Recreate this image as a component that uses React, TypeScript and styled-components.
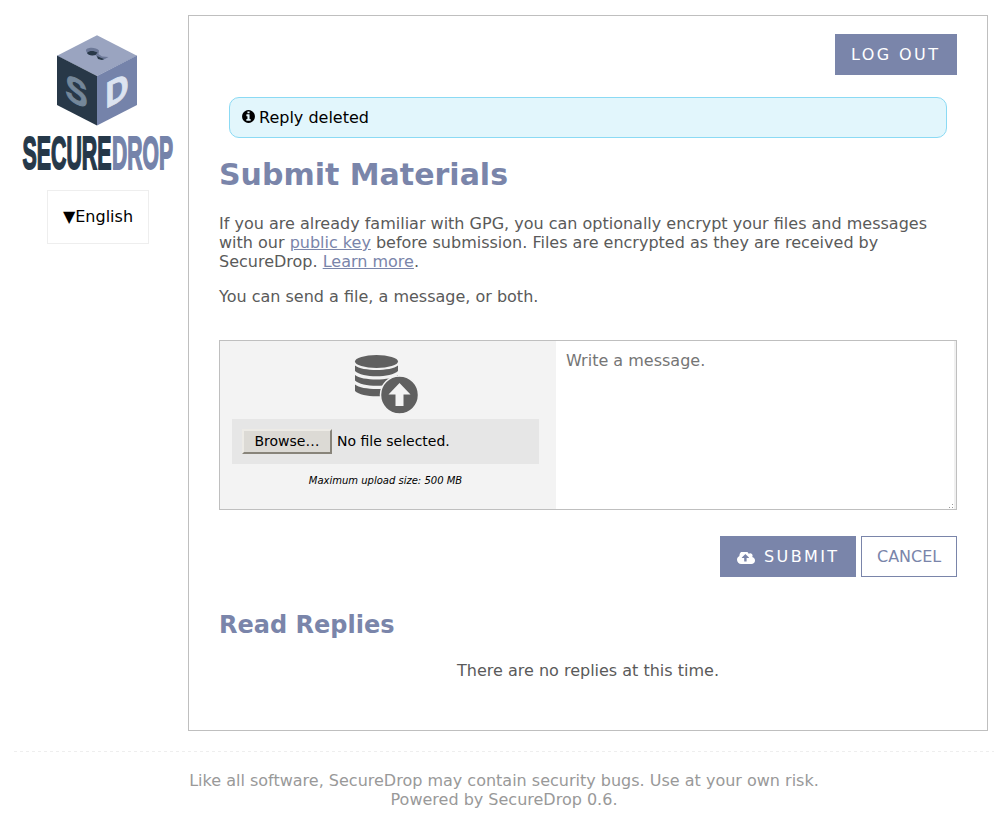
import React from 'react';
import styled, { createGlobalStyle } from 'styled-components';

const GlobalStyle = createGlobalStyle`
  * { box-sizing: border-box; }
  body { margin: 0; background: #fff; color: #5a5a5a; font: 16px/19px "DejaVu Sans", sans-serif; }
  button, textarea { font: inherit; }
`;

const Page = styled.div`
  padding: 15px 14px 0;
  height: 825px;
`;
const Columns = styled.div`
  display: flex;
  height: 716px;
`;
const Sidebar = styled.aside`
  width: 174px;
  display: flex;
  flex-direction: column;
  align-items: center;
  padding-top: 20px;
`;
const Logo = styled.svg`
  display: block;
  width: 152px;
  height: 137px;
  margin-left: -6px;
`;
const LanguageButton = styled.button`
  width: 102px;
  height: 54px;
  margin: 18px 0 0 -6px;
  padding: 0 0 1px;
  border: 1px solid #eee;
  background: #fff;
  color: #000;
  white-space: nowrap;
`;
const Main = styled.main`
  width: 800px;
  border: 1px solid #bfbfbf;
  padding: 18px 30px;
  display: flex;
  flex-direction: column;
`;
const Button = styled.button<{ $outline?: boolean; $width: number }>`
  display: inline-flex;
  align-items: center;
  width: ${p => p.$width}px;
  height: 41px;
  padding: 0 0 1px 15px;
  border: 1px solid #7a85aa;
  white-space: nowrap;
  background: ${p => (p.$outline ? '#fff' : '#7a85aa')};
  color: ${p => (p.$outline ? '#7a85aa' : '#fff')};
  letter-spacing: ${p => (p.$outline ? '0' : '2.4px')};
`;
const Actions = styled.div`
  display: flex;
  justify-content: flex-end;
  gap: 5px;
`;
const Flash = styled.div`
  margin: 22px 10px 0;
  height: 41px;
  border: 1px solid #8bdaf4;
  border-radius: 10px;
  background: #e2f6fc;
  color: #000;
  display: flex;
  align-items: center;
  padding-left: 12px;
`;
const InfoIcon = styled.svg`
  width: 15px;
  height: 15px;
  margin: -3px 3px 0 -1px;
`;
const CloudIcon = styled.svg`
  width: 18px;
  height: 12px;
  margin: 4px 9px 0 1px;
`;
const Title = styled.h1`
  margin: 19px 0 0;
  font-size: 30px;
  line-height: 36px;
  color: #7a85aa;
`;
const Subtitle = styled.h2`
  margin: 33px 0 0;
  font-size: 24px;
  line-height: 30px;
  color: #7a85aa;
`;
const Paragraph = styled.p`
  margin: 0 0 16px;
`;
const Intro = styled.div`
  margin-top: 21px;
`;
const Link = styled.a`
  color: #7a85aa;
  text-decoration: underline;
`;
const Form = styled.div`
  display: flex;
  height: 170px;
  margin: 18px 0 26px;
  border: 1px solid #bfbfbf;
`;
const Upload = styled.div`
  width: 336px;
  background: #f3f3f3;
  padding: 13px 17px 0 12px;
  display: flex;
  flex-direction: column;
  align-items: center;
`;
const UploadIcon = styled.svg`
  width: 64px;
  height: 60px;
  display: block;
`;
const FileRow = styled.div`
  align-self: stretch;
  height: 45px;
  margin-top: 5px;
  padding: 0 10px;
  background: #e6e6e6;
  color: #000;
  display: flex;
  align-items: center;
  gap: 5px;
  font-size: 14px;
`;
const Browse = styled.button`
  width: 90px;
  height: 25px;
  padding: 0 0 1px;
  color: #000;
  background: #dcdad5;
  border: 2px solid;
  border-color: #edebe6 #88847a #88847a #edebe6;
`;
const Limit = styled.div`
  margin-top: 7px;
  color: #000;
  font-size: 10px;
  font-style: italic;
`;
const Message = styled.textarea`
  flex: 1;
  min-width: 0;
  padding: 10px;
  border: 0;
  border-right: 2px solid #f0f0f0;
  resize: none;
  outline: 0;
  background: #fff;
  &::placeholder { color: #757575; }
`;
const MessageCell = styled.div`
  position: relative;
  display: flex;
  flex: 1;
`;
const Grip = styled.svg`
  position: absolute;
  right: 2px;
  bottom: 1px;
  width: 5px;
  height: 5px;
`;
const Empty = styled.p`
  margin: 21px 0 0;
  text-align: center;
`;
const Footer = styled.footer`
  margin-top: 20px;
  padding-top: 20px;
  text-align: center;
  color: #999;
  background: repeating-linear-gradient(90deg, #eee 0 3px, transparent 3px 6px) top / 100% 1px no-repeat;
`;

function SecureDropLogo() {
  return (
    <Logo viewBox="22 35 152 137" aria-label="SecureDrop">
      <path d="M97 35.3 137 55.8 97 76 57 55.8Z" fill="#9aa4c0" />
      <path d="M57 55.5 97 76V125.5L57 105Z" fill="#283848" />
      <path d="M137 55.5 97 76V125.5L137 105Z" fill="#7583aa" />
      <path d="M86 51C85 47 96 46.5 99 50.5L98.500 54 102 56.500 108.500 57 103 60 98 58.500 95.500 55C91 56 87 54 86 51Z" fill="#6c7897" />
      <path d="M87 53C90 50 94 51 97.500 52.500L95.500 55C91 56 88 55 87 53ZM97 56Q101 58 104 59L102 60 98 59Z" fill="#283848" />
      <g fontFamily="Liberation Sans" fontWeight="700" fontSize="36">
        <text transform="matrix(1 .51 0 1 65.500 98)" textLength="22" lengthAdjust="spacingAndGlyphs" fill="#74879a" stroke="#74879a" strokeWidth="1">S</text>
        <text transform="matrix(1 -.51 0 1 105.500 108.500)" textLength="23" lengthAdjust="spacingAndGlyphs" fill="#dce3f0" stroke="#dce3f0" strokeWidth="1">D</text>
      </g>
      <g fontFamily="Liberation Sans Narrow, Liberation Sans" fontWeight="700" fontSize="30" strokeWidth="1.2">
        <text transform="matrix(1 0 0 1.52 22.500 169.400)" textLength="89" lengthAdjust="spacingAndGlyphs" fill="#253849" stroke="#253849">SECURE</text>
        <text transform="matrix(1 0 0 1.52 112 169.400)" textLength="61" lengthAdjust="spacingAndGlyphs" fill="#7583aa" stroke="#7583aa">DROP</text>
      </g>
    </Logo>
  );
}

export default function App() {
  return (
    <Page>
      <GlobalStyle />
      <Columns>
        <Sidebar>
          <SecureDropLogo />
          <LanguageButton>▼English</LanguageButton>
        </Sidebar>
        <Main>
          <Actions><Button $width={122}>LOG OUT</Button></Actions>
          <Flash>
            <InfoIcon viewBox="0 0 1792 1792"><path d="M1152 1376v-160q0-14-9-23t-23-9h-96v-512q0-14-9-23t-23-9h-320q-14 0-23 9t-9 23v160q0 14 9 23t23 9h96v320h-96q-14 0-23 9t-9 23v160q0 14 9 23t23 9h448q14 0 23-9t9-23zm-128-896v-160q0-14-9-23t-23-9h-192q-14 0-23 9t-9 23v160q0 14 9 23t23 9h192q14 0 23-9t9-23zm640 416q0 209-103 385.500t-279.500 279.500-385.500 103-385.500-103-279.500-279.500-103-385.500 103-385.500 279.500-279.500 385.500-103 385.500 103 279.500 279.500 103 385.500z" /></InfoIcon>
            Reply deleted
          </Flash>
          <Title>Submit Materials</Title>
          <Intro>
            <Paragraph>
              If you are already familiar with GPG, you can optionally encrypt your files and messages<br />
              with our <Link>public key</Link> before submission. Files are encrypted as they are received by<br />
              SecureDrop. <Link>Learn more</Link>.
            </Paragraph>
            <Paragraph>You can send a file, a message, or both.</Paragraph>
          </Intro>
          <Form>
            <Upload>
              <UploadIcon viewBox="0 0 64 60" fill="#606060">
                <ellipse cx="22.500" cy="7.500" rx="21.500" ry="6.500" />
                <path d="M1 11.500C8 17.500 37 17.500 44 11.500V17C37 24 8 24 1 17Z" />
                <path d="M1 21C8 27 37 27 44 21V26.500C37 33.500 8 33.500 1 26.500Z" />
                <path d="M1 30.500C8 36.500 37 36.500 44 30.500V37C37 44 8 44 1 37Z" />
                <circle cx="45.500" cy="41" r="19" stroke="#f3f3f3" strokeWidth="1.500" />
                <path d="M45.500 29 56.500 40.500H49.500V52H41.500V40.500H34.500Z" fill="#f3f3f3" />
              </UploadIcon>
              <FileRow><Browse>Browse…</Browse>No file selected.</FileRow>
              <Limit>Maximum upload size: 500 MB</Limit>
            </Upload>
            <MessageCell>
              <Message placeholder="Write a message." />
              <Grip viewBox="0 0 5 5" fill="#999"><path d="M0 4h1v1H0ZM3 4h1v1H3ZM3 1h1v1H3Z" /></Grip>
            </MessageCell>
          </Form>
          <Actions>
            <Button $width={136}>
              <CloudIcon viewBox="-64 256 1920 1280" fill="#fff"><path d="M1216 864q0-14-9-23l-352-352q-9-9-23-9t-23 9l-351 351q-10 12-10 24 0 14 9 23t23 9h224v352q0 13 9.500 22.500t22.500 9.500h192q13 0 22.500-9.500t9.500-22.500v-352h224q13 0 22.500-9.500t9.500-22.500zm640 288q0 159-112.500 271.500t-271.500 112.500h-1088q-185 0-316.500-131.500t-131.500-316.500q0-130 70-240t188-165q-2-30-2-43 0-212 150-362t362-150q156 0 285.500 87t188.500 231q71-62 166-62 106 0 181 75t75 181q0 76-41 138 130 31 213.500 135.500t83.500 238.500z" /></CloudIcon>
              SUBMIT
            </Button>
            <Button $outline $width={96}>CANCEL</Button>
          </Actions>
          <Subtitle>Read Replies</Subtitle>
          <Empty>There are no replies at this time.</Empty>
        </Main>
      </Columns>
      <Footer>
        Like all software, SecureDrop may contain security bugs. Use at your own risk.<br />
        Powered by SecureDrop 0.6.
      </Footer>
    </Page>
  );
}
